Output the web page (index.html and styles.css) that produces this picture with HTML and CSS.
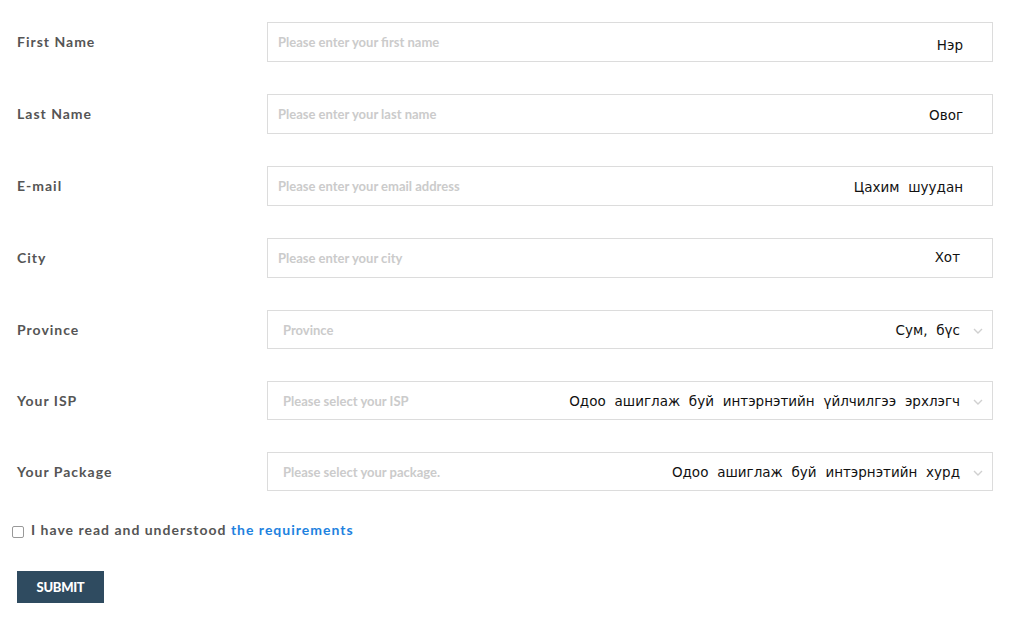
FILE: index.html
```html
<!DOCTYPE html>
<html>
<head>
<meta charset="utf-8">
<link rel="stylesheet" href="styles.css">
</head>
<body>
<form class="form">
  <div class="row">
    <label class="label">First Name</label>
    <div class="field"><span class="ph">Please enter your first name</span><span class="mn mn-1">Нэр</span></div>
  </div>
  <div class="row">
    <label class="label">Last Name</label>
    <div class="field"><span class="ph">Please enter your last name</span><span class="mn">Овог</span></div>
  </div>
  <div class="row">
    <label class="label">E-mail</label>
    <div class="field"><span class="ph">Please enter your email address</span><span class="mn">Цахим шуудан</span></div>
  </div>
  <div class="row">
    <label class="label">City</label>
    <div class="field"><span class="ph">Please enter your city</span><span class="mn mn-city">Хот</span></div>
  </div>
  <div class="row row-sel">
    <label class="label">Province</label>
    <div class="field select"><span class="ph">Province</span><span class="mn">Сум, бүс</span><svg class="arrow" width="10" height="6" viewBox="0 0 10 6"><path d="M1 1l4 4 4-4" fill="none" stroke="#d0d0d0" stroke-width="1.4"/></svg></div>
  </div>
  <div class="row row-sel">
    <label class="label">Your ISP</label>
    <div class="field select"><span class="ph">Please select your ISP</span><span class="mn">Одоо ашиглаж буй интэрнэтийн үйлчилгээ эрхлэгч</span><svg class="arrow" width="10" height="6" viewBox="0 0 10 6"><path d="M1 1l4 4 4-4" fill="none" stroke="#d0d0d0" stroke-width="1.4"/></svg></div>
  </div>
  <div class="row row-sel">
    <label class="label">Your Package</label>
    <div class="field select"><span class="ph">Please select your package.</span><span class="mn">Одоо ашиглаж буй интэрнэтийн хурд</span><svg class="arrow" width="10" height="6" viewBox="0 0 10 6"><path d="M1 1l4 4 4-4" fill="none" stroke="#d0d0d0" stroke-width="1.4"/></svg></div>
  </div>
  <div class="agree">
    <span class="check"></span>
    <span class="agree-text">I have read and understood <a class="link" href="#">the requirements</a></span>
  </div>
  <button class="submit" type="button">SUBMIT</button>
</form>
</body>
</html>
```
FILE: styles.css
```css
html, body {
  margin: 0;
  padding: 0;
  background: #fff;
}
body {
  font-family: Lato, "Open Sans", sans-serif;
}
.form {
  display: flex;
  flex-direction: column;
  padding: 22px 16px 0 12px;
}
.row {
  display: flex;
  align-items: flex-start;
  height: 72px;
}
.row-sel {
  height: 71px;
}
.label {
  width: 250px;
  padding-left: 5px;
  padding-top: 11px;
  font-size: 14px;
  font-weight: 700;
  color: #555;
  letter-spacing: 1px;
}
.field {
  flex: 1;
  height: 40px;
  box-sizing: border-box;
  border: 1px solid #dcdcdc;
  display: flex;
  align-items: center;
  padding: 0 29px 0 10px;
  position: relative;
}
.select {
  height: 39px;
  padding: 0 32px 0 15px;
}
.ph {
  flex: 1;
  font-size: 13px;
  font-weight: 700;
  color: #cbcbcb;
  letter-spacing: 0;
  margin-top: -1px;
}
.select .ph {
  margin-top: 1px;
}
.mn {
  font-family: "DejaVu Sans", sans-serif;
  font-size: 13.5px;
  color: #111;
  word-spacing: 4.5px;
  letter-spacing: 0;
  margin-top: 1px;
}
.mn-1 {
  margin-top: 6px;
}
.mn-city {
  padding-right: 3px;
  margin-top: -2px;
}
.arrow {
  position: absolute;
  right: 9px;
  top: 17px;
}
.agree {
  display: flex;
  align-items: center;
  margin-top: -4px;
  height: 20px;
}
.check {
  width: 10px;
  height: 10px;
  border: 1px solid #999;
  border-radius: 2px;
  margin-top: 5px;
  margin-right: 7px;
  background: #fff;
}
.agree-text {
  font-size: 14px;
  font-weight: 700;
  color: #555;
  letter-spacing: 1px;
}
.link {
  color: #1e82e0;
  text-decoration: none;
}
.submit {
  align-self: flex-start;
  margin-top: 32px;
  margin-left: 5px;
  width: 87px;
  height: 32px;
  border: none;
  background: #2f4b60;
  color: #fff;
  font-family: Lato, sans-serif;
  font-weight: 900;
  font-size: 13px;
  letter-spacing: -0.3px;
  padding: 0;
}
```
